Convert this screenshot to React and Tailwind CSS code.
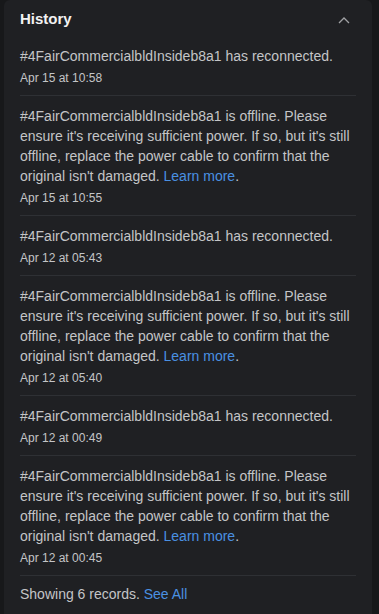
import React from "react";

const name = "#4FairCommercialbldInsideb8a1";

const records = [
  { type: "online", date: "Apr 15 at 10:58" },
  { type: "offline", date: "Apr 15 at 10:55" },
  { type: "online", date: "Apr 12 at 05:43" },
  { type: "offline", date: "Apr 12 at 05:40" },
  { type: "online", date: "Apr 12 at 00:49" },
  { type: "offline", date: "Apr 12 at 00:45" },
];

const Record = ({ record }) => (
  <li className="border-b border-[#2e3034] pt-[10px] pb-[9px]">
    <p className="text-[14px] leading-[20px] text-[#c4c5c7]">
      {record.type === "online" ? (
        <>{name} has reconnected.</>
      ) : (
        <>
          {name} is offline. Please ensure it's receiving sufficient power. If so, but
          it's still offline, replace the power cable to confirm that the original
          isn't damaged. <a href="#" className="text-[#4a90e2]">Learn more</a>.
        </>
      )}
    </p>
    <p className="mt-[4px] text-[12px] leading-[16px] text-[#c4c5c7]">{record.date}</p>
  </li>
);

export default function App() {
  return (
    <div
      className="min-h-[614px] bg-[#17181a] pl-[4px] pr-[7px]"
      style={{ fontFamily: '"Liberation Sans", Arial, sans-serif' }}
    >
      <div className="min-h-[614px] rounded-t-[6px] bg-[#1f2023] px-[16px]">
        <div className="flex items-center justify-between pt-[9px] pb-[7px]">
          <h2 className="text-[15px] font-bold leading-[20px] text-[#f2f2f2]">History</h2>
          <svg width="12" height="12" viewBox="0 0 12 12" className="mr-[6px] mt-[3px]">
            <path d="M1 8 L6 3 L11 8" fill="none" stroke="#a0a1a4" strokeWidth="1.3" />
          </svg>
        </div>
        <ul>
          {records.map((r, i) => (
            <Record key={i} record={r} />
          ))}
        </ul>
        <p className="py-[8px] text-[14px] leading-[20px] text-[#c4c5c7]">
          Showing 6 records. <a href="#" className="text-[#4a90e2]">See All</a>
        </p>
      </div>
    </div>
  );
}
